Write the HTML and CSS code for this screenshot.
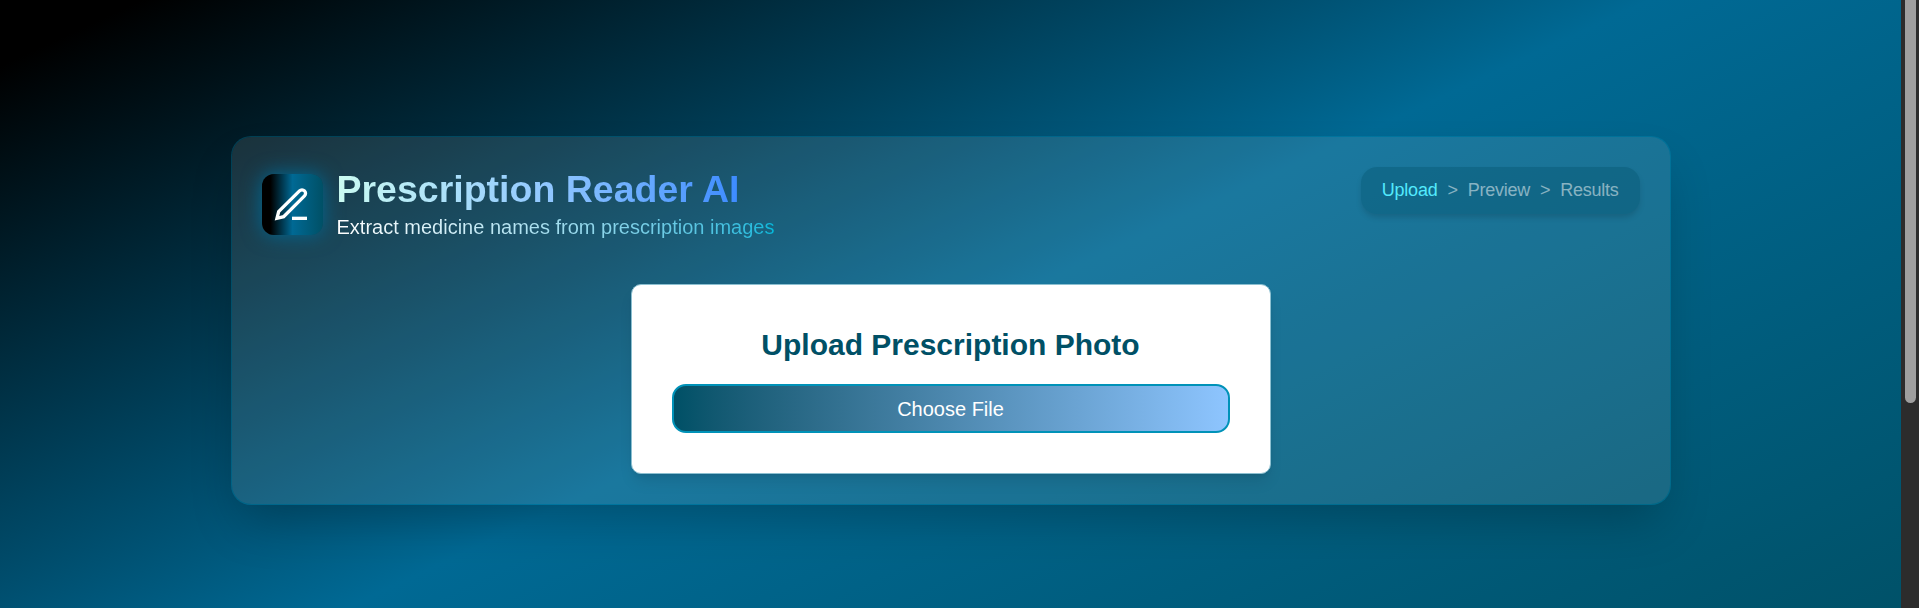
FILE: index.html
```html
<!DOCTYPE html>
<html lang="en">
<head>
<meta charset="utf-8">
<title>Prescription Reader AI</title>
<link rel="stylesheet" href="styles.css">
</head>
<body>
<main class="page">
  <section class="panel">
    <header class="header">
      <div class="brand">
        <div class="logo">
          <svg viewBox="0 0 24 24" fill="none" stroke="currentColor" stroke-width="2"><path d="M12 20h9"/><path d="M16.500 3.500a2.121 2.121 0 0 1 3 3L7 19l-4 1 1-4 12.500-12.500z"/></svg>
        </div>
        <div class="titles">
          <h1 class="title">Prescription Reader AI</h1>
          <p class="subtitle">Extract medicine names from prescription images</p>
        </div>
      </div>
      <nav class="steps">
        <span class="active">Upload</span><span>&gt;</span><span>Preview</span><span>&gt;</span><span>Results</span>
      </nav>
    </header>
    <div class="upload">
      <h2 class="upload-title">Upload Prescription Photo</h2>
      <button class="choose">Choose File</button>
    </div>
  </section>
</main>
<div class="scrollbar"><div class="thumb"></div></div>
</body>
</html>
```
FILE: styles.css
```css
* { box-sizing: border-box; margin: 0; }
body { display: flex; height: 608px; font-family: "Liberation Sans", Arial, sans-serif; }
.page {
  flex: 1; height: 608px; padding-top: 136px;
  background: linear-gradient(155deg, #000 60px, #006994 697px, #005066 1394px);
  background-size: 100% 652px;
}
.panel {
  width: 1440px; height: 369px; margin: 0 auto; padding: 30px;
  border: 1px solid rgba(0, 146, 184, .3); border-radius: 20px;
  background: rgba(255, 255, 255, .1);
  background-clip: padding-box;
  box-shadow: 0 25px 50px -12px rgba(0, 0, 0, .25);
}
.header { display: flex; justify-content: space-between; align-items: flex-start; height: 117px; }
.brand { display: flex; gap: 14px; }
.logo {
  display: flex; align-items: center; justify-content: center;
  width: 61px; height: 61px; margin-top: 7px; border-radius: 12px; color: #fff;
  background: linear-gradient(to right, #000 14%, #006994 50%, #005066);
  box-shadow: 0 0 20px #006994;
}
.logo svg { width: 40px; height: 40px; }
.title {
  font-size: 37.5px; line-height: 44px;
  background: linear-gradient(to right in oklab, #cbfbf1, #8ec5ff, #2b7fff);
  background-clip: text; color: transparent;
}
.subtitle {
  width: max-content; margin-top: 4px; font-size: 20px; line-height: 24px;
  background: linear-gradient(to right in oklab, #fff, #00b8db);
  background-clip: text; color: transparent;
}
.steps {
  display: flex; gap: 10px; height: 47px; padding: 12px 21px; border-radius: 16px;
  font-size: 18px; line-height: 22px; letter-spacing: -.25px; color: rgba(255, 255, 255, .5);
  background: rgba(0, 80, 102, .33);
  box-shadow: 0 4px 6px -1px rgba(0, 0, 0, .15);
}
.active { color: #53eafd; }
.upload {
  width: 640px; height: 190px; margin: 0 auto; padding: 41px 40px 40px;
  border: 1px solid #8bbfd0; border-radius: 10px; background: #fff; text-align: center;
  box-shadow: 0 10px 15px -3px rgba(0, 0, 0, .1), 0 4px 6px -4px rgba(0, 0, 0, .1);
}
.upload-title { font-size: 30px; line-height: 38px; color: #005066; }
.choose {
  display: block; width: 100%; height: 49px; margin-top: 20px; padding-top: 2px; border: 2px solid #0092b8; border-radius: 14px;
  font: 20px "Liberation Sans", Arial, sans-serif; color: #fff;
  background: linear-gradient(to right in oklab, #005066, #8ec5ff);
}
.scrollbar { width: 18px; height: 608px; padding-left: 4px; background: #2c2c2c; }
.thumb { width: 11px; height: 403px; border-radius: 0 0 6px 6px; background: #9f9f9f; }
```
